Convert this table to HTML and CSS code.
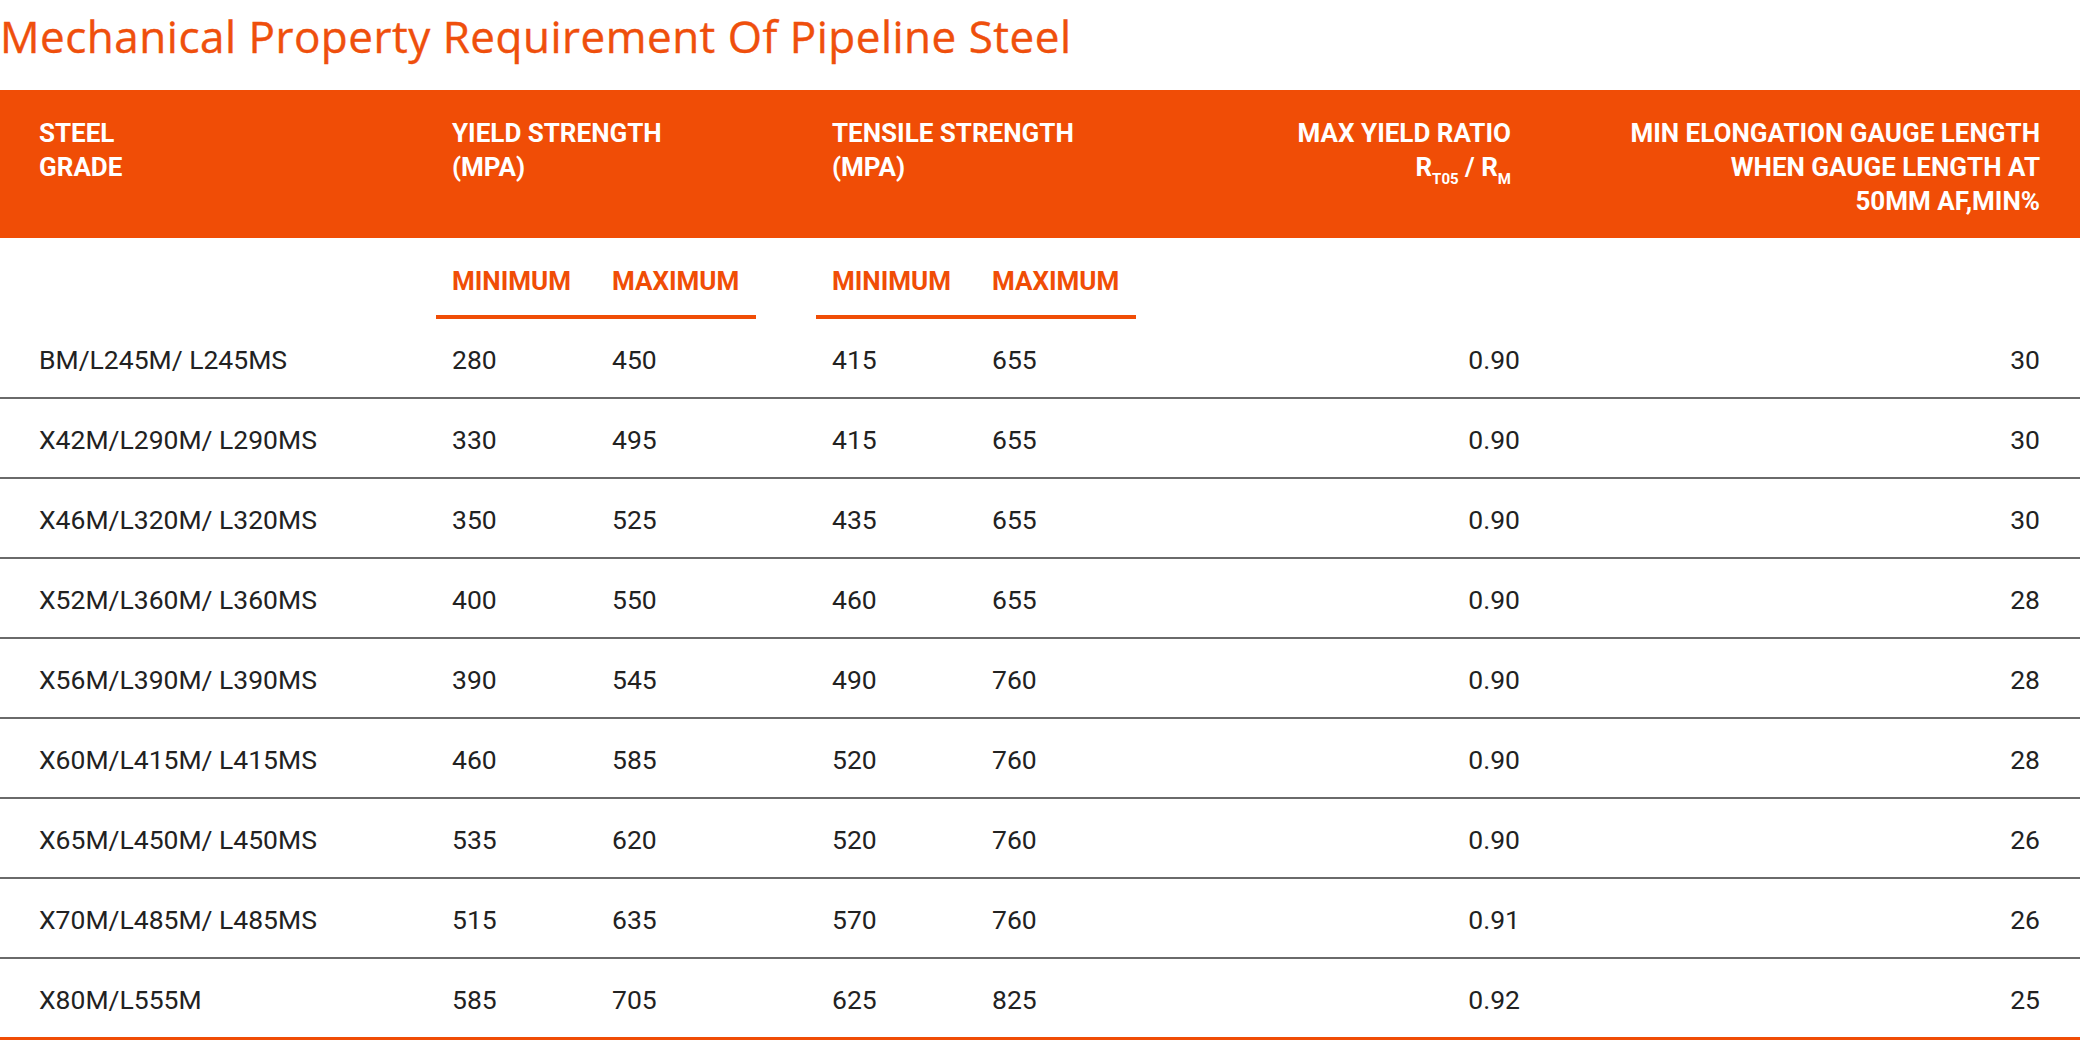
FILE: index.html
```html
<!DOCTYPE html>
<html lang="en">
<head>
<meta charset="utf-8">
<title>Mechanical Property Requirement Of Pipeline Steel</title>
<link rel="stylesheet" href="styles.css">
</head>
<body>
<h1 class="title">Mechanical Property Requirement Of Pipeline Steel</h1>
<div class="table">
  <div class="row head">
    <div class="cell c1">STEEL<br>GRADE</div>
    <div class="cell group g1">YIELD STRENGTH<br>(MPA)</div>
    <div class="cell group g2">TENSILE STRENGTH<br>(MPA)</div>
    <div class="cell ratio">MAX YIELD RATIO<br>R<sub>T05</sub> / R<sub>M</sub></div>
    <div class="cell elong">MIN ELONGATION GAUGE LENGTH<br>WHEN GAUGE LENGTH AT<br>50MM AF,MIN%</div>
  </div>
  <div class="row sub">
    <div class="cell c1"></div>
    <div class="cell mm">MINIMUM</div>
    <div class="cell mm">MAXIMUM</div>
    <div class="cell gap"></div>
    <div class="cell mm">MINIMUM</div>
    <div class="cell mm">MAXIMUM</div>
  </div>
  <div class="row data"><div class="cell c1">BM/L245M/ L245MS</div><div class="cell">280</div><div class="cell">450</div><div class="cell gap"></div><div class="cell">415</div><div class="cell">655</div><div class="cell ratio">0.90</div><div class="cell elong">30</div></div>
  <div class="row data"><div class="cell c1">X42M/L290M/ L290MS</div><div class="cell">330</div><div class="cell">495</div><div class="cell gap"></div><div class="cell">415</div><div class="cell">655</div><div class="cell ratio">0.90</div><div class="cell elong">30</div></div>
  <div class="row data"><div class="cell c1">X46M/L320M/ L320MS</div><div class="cell">350</div><div class="cell">525</div><div class="cell gap"></div><div class="cell">435</div><div class="cell">655</div><div class="cell ratio">0.90</div><div class="cell elong">30</div></div>
  <div class="row data"><div class="cell c1">X52M/L360M/ L360MS</div><div class="cell">400</div><div class="cell">550</div><div class="cell gap"></div><div class="cell">460</div><div class="cell">655</div><div class="cell ratio">0.90</div><div class="cell elong">28</div></div>
  <div class="row data"><div class="cell c1">X56M/L390M/ L390MS</div><div class="cell">390</div><div class="cell">545</div><div class="cell gap"></div><div class="cell">490</div><div class="cell">760</div><div class="cell ratio">0.90</div><div class="cell elong">28</div></div>
  <div class="row data"><div class="cell c1">X60M/L415M/ L415MS</div><div class="cell">460</div><div class="cell">585</div><div class="cell gap"></div><div class="cell">520</div><div class="cell">760</div><div class="cell ratio">0.90</div><div class="cell elong">28</div></div>
  <div class="row data"><div class="cell c1">X65M/L450M/ L450MS</div><div class="cell">535</div><div class="cell">620</div><div class="cell gap"></div><div class="cell">520</div><div class="cell">760</div><div class="cell ratio">0.90</div><div class="cell elong">26</div></div>
  <div class="row data"><div class="cell c1">X70M/L485M/ L485MS</div><div class="cell">515</div><div class="cell">635</div><div class="cell gap"></div><div class="cell">570</div><div class="cell">760</div><div class="cell ratio">0.91</div><div class="cell elong">26</div></div>
  <div class="row data last"><div class="cell c1">X80M/L555M</div><div class="cell">585</div><div class="cell">705</div><div class="cell gap"></div><div class="cell">625</div><div class="cell">825</div><div class="cell ratio">0.92</div><div class="cell elong">25</div></div>
</div>
</body>
</html>
```
FILE: styles.css
```css
html, body {
  margin: 0;
  padding: 0;
  background: #ffffff;
}
body {
  width: 2080px;
  font-family: Roboto, "Liberation Sans", sans-serif;
}
.title {
  margin: 0;
  height: 90px;
  box-sizing: border-box;
  padding-top: 6px;
  font-family: "Open Sans", Lato, sans-serif;
  font-weight: 400;
  font-size: 44px;
  letter-spacing: 0.5px;
  line-height: 60px;
  color: #ef4f0c;
  white-space: nowrap;
  -webkit-text-stroke: 0.4px #ef4f0c;
}
.table {
  width: 2080px;
}
.row {
  display: grid;
  grid-template-columns: 436px 160px 160px 60px 160px 160px 404px 540px;
}
.cell {
  font-size: 26.5px;
  line-height: 34px;
  padding-left: 16px;
  white-space: nowrap;
}
.cell.c1 {
  padding-left: 39px;
}
.head {
  background: #f04d06;
  color: #ffffff;
  padding: 26px 0 20px;
}
.head .cell {
  font-size: 26px;
  font-weight: 700;
}
.head .g1 {
  grid-column: 2 / 4;
}
.head .g2 {
  grid-column: 5 / 7;
}
.ratio {
  grid-column: 7;
  text-align: right;
  padding-left: 0;
  padding-right: 20px;
}
.head .ratio {
  padding-right: 29px;
}
.elong {
  grid-column: 8;
  text-align: right;
  padding-left: 0;
  padding-right: 40px;
}
.head sub {
  font-size: 15px;
  line-height: 0;
  vertical-align: -8px;
}
.sub .cell {
  padding-top: 26px;
  padding-bottom: 17px;
  height: 34px;
}
.sub .mm {
  color: #f04d06;
  font-size: 26px;
  font-weight: 700;
  border-bottom: 4px solid #f04d06;
}
.data {
  border-bottom: 2px solid #6a6a6a;
}
.data .cell {
  color: #222222;
  padding-top: 24px;
  padding-bottom: 20px;
}
.data.last {
  border-bottom: 4px solid #f04d06;
}
```
